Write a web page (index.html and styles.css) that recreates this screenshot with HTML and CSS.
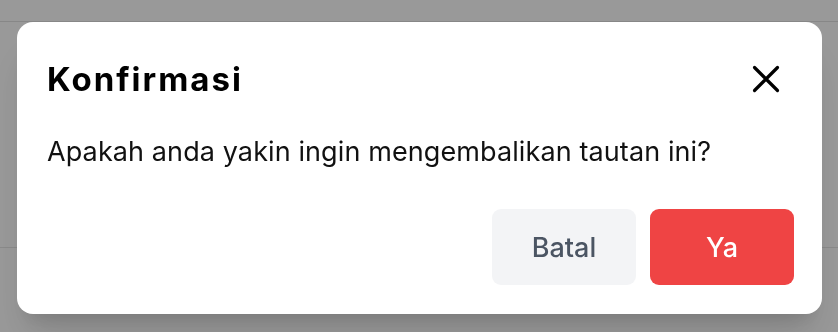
FILE: index.html
```html
<!DOCTYPE html>
<html lang="id">
<head>
<meta charset="utf-8">
<title>Konfirmasi</title>
<link rel="stylesheet" href="styles.css">
</head>
<body>
<div class="page">
  <div class="page-header"></div>
  <div class="page-row"></div>
</div>
<div class="overlay">
  <div class="modal" role="dialog" aria-labelledby="modal-title">
    <div class="modal-header">
      <h2 class="modal-title" id="modal-title">Konfirmasi</h2>
      <button class="close-btn" aria-label="Tutup">
        <svg width="28" height="28" viewBox="0 0 28 28" fill="none" stroke="#000" stroke-width="3.2" stroke-linecap="round">
          <path d="M2.5 2.5L25.5 25.5M25.5 2.5L2.5 25.5"/>
        </svg>
      </button>
    </div>
    <p class="modal-text">Apakah anda yakin ingin mengembalikan tautan ini?</p>
    <div class="modal-actions">
      <button class="btn btn-cancel">Batal</button>
      <button class="btn btn-confirm">Ya</button>
    </div>
  </div>
</div>
</body>
</html>
```
FILE: styles.css
```css
html, body {
  margin: 0;
  padding: 0;
  height: 100%;
}
body {
  font-family: Inter, "Noto Sans", sans-serif;
  background: #ffffff;
  overflow: hidden;
}
.page {
  height: 100%;
}
.page-header {
  height: 21px;
  border-bottom: 1px solid #e2e2e2;
}
.page-row {
  height: 225px;
  border-bottom: 1px solid #e6e6e6;
}
.overlay {
  position: fixed;
  inset: 0;
  background: rgba(0, 0, 0, 0.4);
  display: flex;
  align-items: flex-start;
  padding: 22px 16px 0 17px;
}
.modal {
  width: 805px;
  height: 292px;
  box-sizing: border-box;
  background: #ffffff;
  border-radius: 16px;
  padding: 37px 28px 29px 30px;
  box-shadow: 0 30px 40px -8px rgba(0, 0, 0, 0.12), 0 14px 18px -10px rgba(0, 0, 0, 0.12);
  display: flex;
  flex-direction: column;
}
.modal-header {
  display: flex;
  align-items: center;
  justify-content: space-between;
  height: 40px;
}
.modal-title {
  margin: 0;
  font-family: Inter, "Noto Sans", sans-serif;
  font-weight: 700;
  font-size: 33px;
  line-height: 40px;
  color: #000;
  letter-spacing: 2px;
}
.close-btn {
  width: 40px;
  height: 40px;
  margin-right: 8px;
  padding: 0;
  border: 0;
  background: transparent;
  display: flex;
  align-items: center;
  justify-content: center;
  cursor: pointer;
}
.modal-text {
  margin: 33px 0 0 0;
  font-size: 27px;
  line-height: 40px;
  color: #111;
  letter-spacing: 0.1px;
}
.modal-actions {
  margin-top: auto;
  display: flex;
  justify-content: flex-end;
  gap: 14px;
}
.btn {
  width: 144px;
  height: 76px;
  border: 0;
  border-radius: 9px;
  font-family: Inter, "Noto Sans", sans-serif;
  font-size: 27px;
  font-weight: 500;
  cursor: pointer;
}
.btn-cancel {
  background: #f3f4f6;
  color: #4b5563;
}
.btn-confirm {
  background: #ef4444;
  color: #ffffff;
}
```
